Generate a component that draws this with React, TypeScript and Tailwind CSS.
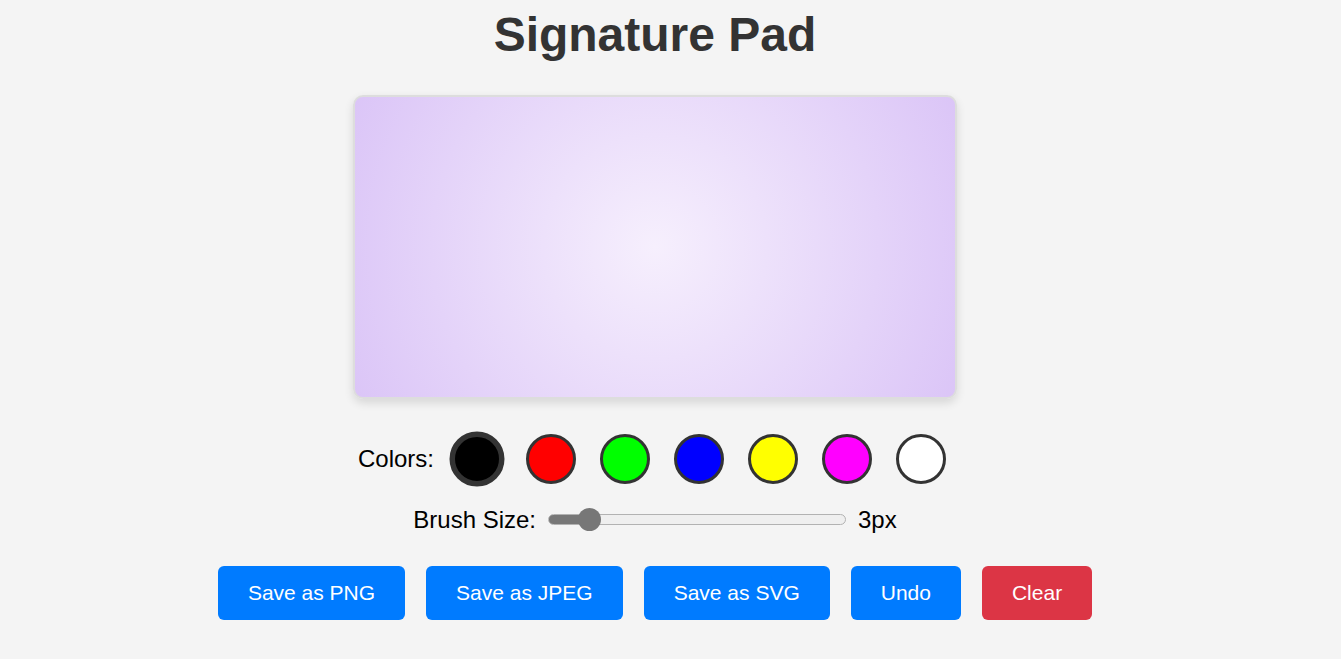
import React, { useState } from "react";

const colors = ["#000000", "#ff0000", "#00ff00", "#0000ff", "#ffff00", "#ff00ff", "#ffffff"];

const App = () => {
  // States
  const [activeColor, setActiveColor] = useState("#000000");
  const [brushSize, setBrushSize] = useState(3);

  const percent = ((brushSize - 1) / 19) * 100;

  return (
    <div className="min-h-screen bg-[#f4f4f4] font-['Liberation_Sans',Arial,sans-serif]">
      <div className="w-[1310px] flex flex-col items-center pt-[8px]">
        {/* Title */}
        <h1 className="text-[48px] leading-[54px] font-bold text-[#333]">Signature Pad</h1>

        {/* Canvas */}
        <div className="mt-[33px] w-[604px] h-[304px] border-2 border-[#ddd] rounded-[10px] shadow-[0_4px_10px_rgba(0,0,0,0.12)] bg-[radial-gradient(circle_at_center,#f6effd_0%,#dbc5f7_100%)]"></div>

        {/* Colors */}
        <div className="mt-[35px] h-[50px] flex items-center">
          <span className="mx-[6px] text-[24px] text-black">Colors:</span>
          {colors.map((c) => (
            <button
              key={c}
              onClick={() => setActiveColor(c)}
              className={
                activeColor === c
                  ? "mx-[12px] w-[50px] h-[50px] rounded-full border-[5px] border-[#333] scale-110"
                  : "mx-[12px] w-[50px] h-[50px] rounded-full border-[3px] border-[#333]"
              }
              style={{ backgroundColor: c }}
            ></button>
          ))}
        </div>

        {/* Brush Size */}
        <div className="mt-[22px] h-[27px] flex items-center text-[24px] text-black">
          <span className="mx-[6px]">Brush Size:</span>
          <input
            type="range"
            min={1}
            max={20}
            value={brushSize}
            onChange={(e) => setBrushSize(Number(e.target.value))}
            className="mx-[6px] w-[298px] h-[11px] appearance-none rounded-full border border-[#b2b2b2] outline-none cursor-pointer [&::-webkit-slider-thumb]:appearance-none [&::-webkit-slider-thumb]:w-[23px] [&::-webkit-slider-thumb]:h-[23px] [&::-webkit-slider-thumb]:rounded-full [&::-webkit-slider-thumb]:bg-[#777]"
            style={{
              background: `linear-gradient(to right, #777 0%, #777 ${percent}%, #efefef ${percent}%, #efefef 100%)`,
            }}
          />
          <span className="mx-[6px]">{brushSize}px</span>
        </div>

        {/* Buttons */}
        <div className="mt-[33px] flex gap-[21px]">
          <button className="px-[30px] h-[54px] rounded-[6px] bg-[#007bff] text-white text-[21px]">Save as PNG</button>
          <button className="px-[30px] h-[54px] rounded-[6px] bg-[#007bff] text-white text-[21px]">Save as JPEG</button>
          <button className="px-[30px] h-[54px] rounded-[6px] bg-[#007bff] text-white text-[21px]">Save as SVG</button>
          <button className="px-[30px] h-[54px] rounded-[6px] bg-[#007bff] text-white text-[21px]">Undo</button>
          <button className="px-[30px] h-[54px] rounded-[6px] bg-[#dc3545] text-white text-[21px]">Clear</button>
        </div>
      </div>
    </div>
  );
};

export default App;
